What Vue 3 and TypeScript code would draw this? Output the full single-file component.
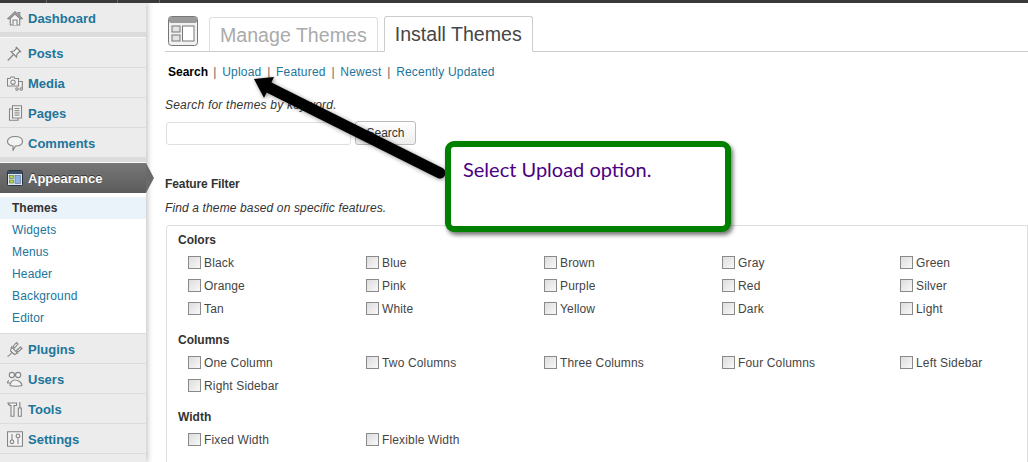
<template>
  <div class="page">
    <div class="topbar">
      <i class="top-line" style="left: 46px"></i>
      <i class="top-line" style="left: 117px"></i>
      <i class="top-line" style="left: 159px"></i>
    </div>
    <div class="layout">
      <aside class="sidebar">
        <template v-for="item in menu" :key="item.label">
          <div v-if="item.sep" class="menu-sep"></div>
          <div v-if="item.current" class="menu-current">
            <div class="current-head">
              <svg class="icon" viewBox="0 0 16 16">
                <rect x="0.5" y="0.5" width="15" height="15" rx="1" fill="#dfe8f2" stroke="#2b3440" />
                <rect x="1" y="1" width="14" height="3" fill="#3c4f66" />
                <rect x="2.5" y="5.5" width="4" height="3" fill="#b9d24c" stroke="#55702a" stroke-width="0.6" />
                <rect x="2.5" y="10" width="4" height="3" fill="#b9d24c" stroke="#55702a" stroke-width="0.6" />
                <rect x="8" y="5.5" width="5.5" height="8" fill="#8fb2e0" stroke="#4f6f9c" stroke-width="0.6" />
              </svg>
              <span>{{ item.label }}</span>
            </div>
            <ul class="submenu">
              <li v-for="sub in submenu" :key="sub" :class="{ active: sub === 'Themes' }">{{ sub }}</li>
            </ul>
          </div>
          <div v-else class="menu-item">
            <svg class="icon" viewBox="0 0 16 16" fill="#f3f3f3" stroke="#848484" stroke-width="1.1">
              <path v-for="(d, i) in item.icon" :key="i" :d="d" />
            </svg>
            <span>{{ item.label }}</span>
          </div>
        </template>
      </aside>

      <main class="content">
        <div class="title-row">
          <svg class="page-icon" viewBox="0 0 30 30">
            <rect x="0.5" y="0.5" width="29" height="29" rx="3" fill="#f2f2f2" stroke="#777" />
            <rect x="1" y="1" width="28" height="6" rx="2" fill="#9b9b9b" />
            <rect x="4" y="10" width="8" height="6" fill="#e4e4e4" stroke="#777" />
            <rect x="4" y="19" width="8" height="6" fill="#e4e4e4" stroke="#777" />
            <rect x="14.5" y="10" width="11.5" height="15" fill="#fff" stroke="#777" />
          </svg>
          <div class="tab">Manage Themes</div>
          <div class="tab tab-active">Install Themes</div>
        </div>

        <div class="subnav">
          <b>Search</b>
          <template v-for="link in links" :key="link">
            <span class="bar">|</span><a>{{ link }}</a>
          </template>
        </div>

        <p class="hint search-hint">Search for themes by keyword.</p>
        <div class="search-row">
          <div class="search-input"></div>
          <div class="search-btn">Search</div>
        </div>

        <h4>Feature Filter</h4>
        <p class="hint filter-hint">Find a theme based on specific features.</p>

        <div class="filter-box">
          <template v-for="group in groups" :key="group.name">
            <div class="group-name">{{ group.name }}</div>
            <div class="check-grid">
              <label v-for="opt in group.options" :key="opt" class="check">
                <i class="box"></i>{{ opt }}
              </label>
            </div>
          </template>
        </div>
      </main>
    </div>

    <svg class="arrow" width="460" height="200" viewBox="0 0 460 200">
      <line x1="440" y1="173" x2="266" y2="86" stroke="#000" stroke-width="11" stroke-linecap="round" />
      <polygon points="254,79 274,77 264,98" fill="#000" />
    </svg>

    <div class="callout">Select Upload option.</div>
  </div>
</template>

<script setup lang="ts">
interface MenuItem {
  label: string;
  icon?: string[];
  sep?: boolean;
  current?: boolean;
}

const menu: MenuItem[] = [
  {
    label: "Dashboard",
    icon: [
      "M11 2.5 H12.8 V6.5 H11 Z",
      "M3.3 8 V15 H12.7 V8 L8 3.8 Z",
      "M6 15 V10 H10 V15",
      "M0.8 8.6 L8 1.8 L15.2 8.6 L13.5 8.8 L8 3.8 L2.5 8.8 Z",
    ],
  },
  {
    label: "Posts",
    sep: true,
    icon: [
      "M0.8 15.5 L6.5 9.5",
      "M4 6.5 L9.5 12 L10 9 L12.5 6.5 L14 7 L9 2 L9.5 3.5 L7 6 Z",
    ],
  },
  {
    label: "Media",
    icon: [
      "M0.5 3.5 H3 L4 2 H7 L8 3.5 H11.5 V11 H0.5 Z",
      "M8.2 7.2 A2.2 2.2 0 1 1 3.8 7.2 A2.2 2.2 0 1 1 8.2 7.2",
      "M11.5 6.5 H15.3 V13.5",
      "M11.2 14 A1.2 1.2 0 1 0 8.8 14 A1.2 1.2 0 1 0 11.2 14",
      "M15.4 14 A1.2 1.2 0 1 0 13 14 A1.2 1.2 0 1 0 15.4 14",
    ],
  },
  {
    label: "Pages",
    icon: [
      "M2.5 4 H11 V15.3 H2.5 Z",
      "M5.5 0.8 H14.5 V13 H5.5 Z",
      "M7.5 3.5 H12.5",
      "M7.5 5.7 H12.5",
      "M7.5 7.9 H12.5",
      "M7.5 10.1 H12.5",
    ],
  },
  {
    label: "Comments",
    icon: [
      "M8 1.5 C12.5 1.5 15.5 3.5 15.5 6.5 C15.5 9.5 12.5 11 8.5 11 L6 15.3 L6 11 C3 10.5 0.5 9 0.5 6.5 C0.5 3.5 3.5 1.5 8 1.5 Z",
    ],
  },
  { label: "Appearance", sep: true, current: true },
  {
    label: "Plugins",
    icon: [
      "M0.5 15.5 C2 15 3 14 5 11.5",
      "M6 5.5 L9.5 1.5 L11 3 L7.5 7 Z",
      "M9.5 9.5 L13.5 6 L15 7.5 L11 11 Z",
      "M4.5 6 L10.5 12 L7.5 13.5 L3.5 10 Z",
    ],
  },
  {
    label: "Users",
    icon: [
      "M7.5 4 A2.6 2.6 0 1 1 2.3 4 A2.6 2.6 0 1 1 7.5 4",
      "M13.7 4 A2.6 2.6 0 1 1 8.5 4 A2.6 2.6 0 1 1 13.7 4",
      "M2 9.5 C0.8 10 0.5 11 0.6 12 L3 12",
      "M3 14.5 C3 11.5 5.5 9 8 9 C10.5 9 15 11 15 14.5 C13 15.5 5 15.5 3 14.5 Z",
    ],
  },
  {
    label: "Tools",
    icon: [
      "M1 2 H9.5 V4.5 H7 V15.3 H4 V4.5 C2.5 4.5 1.5 4 1 2 Z",
      "M12.8 1 V7",
      "M11.3 7 H14.3 V15.3 H11.3 Z",
    ],
  },
  {
    label: "Settings",
    icon: [
      "M0.5 0.8 H15.5 V15.3 H0.5 Z",
      "M5 3 V9",
      "M5 9 A1.8 1.8 0 1 1 5 12.6 A1.8 1.8 0 1 1 5 9",
      "M11 7.5 V13",
      "M11 3 A1.8 1.8 0 1 1 11 6.8 A1.8 1.8 0 1 1 11 3",
    ],
  },
];

const submenu = ["Themes", "Widgets", "Menus", "Header", "Background", "Editor"];
const links = ["Upload", "Featured", "Newest", "Recently Updated"];

const groups = [
  {
    name: "Colors",
    options: ["Black", "Blue", "Brown", "Gray", "Green", "Orange", "Pink", "Purple", "Red", "Silver", "Tan", "White", "Yellow", "Dark", "Light"],
  },
  {
    name: "Columns",
    options: ["One Column", "Two Columns", "Three Columns", "Four Columns", "Left Sidebar", "Right Sidebar"],
  },
  { name: "Width", options: ["Fixed Width", "Flexible Width"] },
];
</script>

<style scoped>
.page {
  position: relative;
  width: 1028px;
  height: 462px;
  overflow: hidden;
  background: #fff;
  color: #333;
  font-family: "Liberation Sans", Arial, sans-serif;
  font-size: 12px;
}

.topbar {
  position: relative;
  height: 3px;
  background: #3a3a3a;
}

.top-line {
  position: absolute;
  top: 0;
  width: 1px;
  height: 3px;
  background: #666;
}

.layout {
  display: flex;
}

.sidebar {
  flex: none;
  width: 146px;
  height: 459px;
  background: #ececec;
  box-shadow: 2px 0 5px rgba(0, 0, 0, 0.22);
}

.menu-item {
  display: flex;
  align-items: center;
  gap: 5px;
  height: 28px;
  padding: 1px 0 0 7px;
  border-bottom: 1px solid #dcdcdc;
  color: #21759b;
  font-size: 13px;
  font-weight: bold;
}

.icon {
  flex: none;
  width: 16px;
  height: 16px;
}

.menu-sep {
  height: 4px;
  background: #dcdcdc;
  border-bottom: 1px solid #f8f8f8;
}

.menu-current {
  background: #fff;
  border-bottom: 1px solid #dcdcdc;
}

.current-head {
  position: relative;
  display: flex;
  align-items: center;
  gap: 5px;
  height: 30px;
  padding-left: 7px;
  background: linear-gradient(#777, #5c5c5c);
  color: #fff;
  font-size: 13px;
  font-weight: bold;
  text-shadow: 0 -1px 0 #333;
}

.current-head::after {
  content: "";
  position: absolute;
  left: 146px;
  top: 0;
  border-left: 8px solid #6a6a6a;
  border-top: 15px solid transparent;
  border-bottom: 15px solid transparent;
}

.submenu {
  list-style: none;
  margin: 0;
  padding: 4px 0 4px;
}

.submenu li {
  height: 22px;
  line-height: 22px;
  padding-left: 12px;
  color: #21759b;
  letter-spacing: 0.15px;
}

.submenu li.active {
  background: #eaf2fa;
  color: #333;
  font-weight: bold;
  letter-spacing: 0;
}

.content {
  flex: 1;
  min-width: 0;
  padding: 13px 0 0 19px;
}

.title-row {
  display: flex;
  align-items: flex-end;
  height: 35px;
  border-bottom: 1px solid #ccc;
}

.page-icon {
  flex: none;
  width: 30px;
  height: 30px;
  margin: 0 11px 5px 3px;
}

.tab {
  box-sizing: border-box;
  height: 35px;
  margin-right: 6px;
  margin-bottom: -1px;
  padding: 0 10px;
  line-height: 34px;
  border: 1px solid #dfdfdf;
  border-bottom-color: #ccc;
  border-radius: 3px 3px 0 0;
  color: #aaa;
  font-size: 19.6px;
}

.tab-active {
  height: 36px;
  border-color: #ccc;
  border-bottom-color: #fff;
  color: #464646;
}

.subnav {
  display: flex;
  height: 15px;
  line-height: 15px;
  margin: 13px 0 0 3px;
}

.subnav b {
  color: #000;
  margin-right: -0.5px;
}

.subnav a {
  color: #21759b;
  letter-spacing: 0.2px;
}

.bar {
  margin: 0 5.75px;
  color: #666;
}

.hint {
  margin: 0;
  font-style: italic;
  font-size: 12px;
  line-height: 15px;
  letter-spacing: 0.13px;
}

.search-hint {
  margin-top: 18px;
  letter-spacing: 0.22px;
}

.search-row {
  display: flex;
  gap: 4px;
  margin: 8px 0 0 1px;
}

.search-input {
  box-sizing: border-box;
  width: 185px;
  height: 23px;
  margin-top: 1px;
  border: 1px solid #dfdfdf;
  border-radius: 3px;
}

.search-btn {
  box-sizing: border-box;
  width: 61px;
  height: 24px;
  line-height: 22px;
  text-align: center;
  border: 1px solid #bbb;
  border-radius: 3px;
  background: linear-gradient(#fff, #eee);
}

h4 {
  margin: 32px 0 0;
  height: 15px;
  line-height: 15px;
  font-size: 12px;
  color: #333;
  letter-spacing: -0.1px;
}

.filter-hint {
  margin-top: 9px;
}

.filter-box {
  box-sizing: border-box;
  margin: 9px 0 0 1px;
  padding: 7px 0 0 11px;
  border: 1px solid #dfdfdf;
  border-radius: 3px 0 0 0;
  height: 300px;
}

.group-name {
  height: 15px;
  line-height: 15px;
  font-weight: bold;
  margin-bottom: 3px;
}

.check-grid {
  display: grid;
  grid-template-columns: repeat(5, 178px);
  grid-auto-rows: 23px;
  margin-left: 10px;
  margin-bottom: 13px;
}

.check {
  display: flex;
  align-items: center;
  color: #444;
  letter-spacing: 0.15px;
}

.box {
  box-sizing: border-box;
  width: 13px;
  height: 13px;
  margin-right: 3px;
  border: 1px solid #8a8a8a;
  background: linear-gradient(135deg, #ddd, #f8f8f8);
}

.arrow {
  position: absolute;
  left: 0;
  top: 0;
  overflow: visible;
  filter: drop-shadow(1px 1px 2px rgba(0, 0, 0, 0.45));
}

.callout {
  position: absolute;
  left: 445px;
  top: 141px;
  box-sizing: border-box;
  width: 286px;
  height: 91px;
  padding: 9px 12px;
  border: 6px solid #008000;
  border-radius: 9px;
  background: #fff;
  box-shadow: 2px 3px 4px rgba(0, 0, 0, 0.55);
  color: #4b0082;
  font-family: Lato, "Open Sans", sans-serif;
  font-size: 20px;
  line-height: 26px;
}
</style>
